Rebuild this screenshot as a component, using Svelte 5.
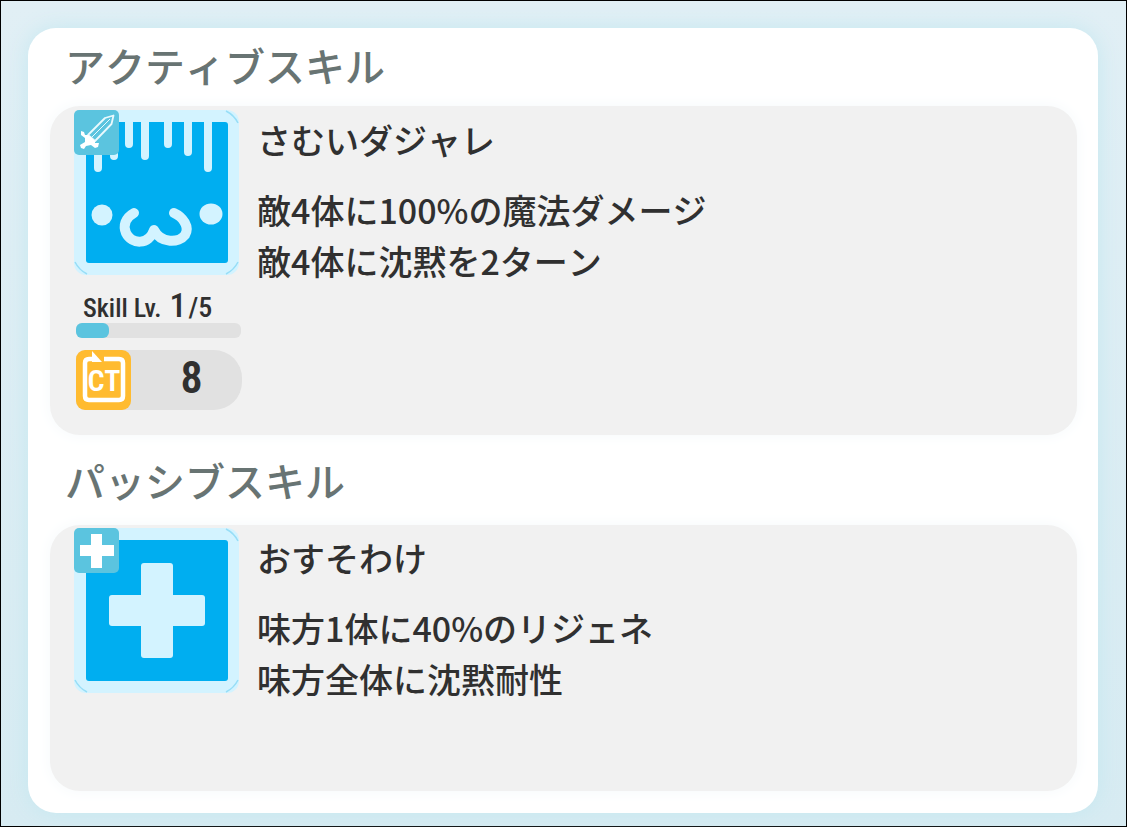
<script>
  const level = 1;
  const maxLevel = 5;
</script>

<main>
  <div class="panel">
    <section>
      <h2>アクティブスキル</h2>
      <article class="card active">
        <div class="side">
          <div class="icon">
            <svg viewBox="0 0 165 165" aria-hidden="true">
              <rect width="165" height="165" rx="12" fill="#d3f3ff" />
              <path d="M152 1Q160 5 164 13M1 152Q5 160 13 164M152 164Q160 160 164 152" fill="none" stroke="#97def7" stroke-width="1.5" />
              <rect x="12" y="12" width="142" height="141" rx="3" fill="#00aef0" />
              <path d="M24 12V58M40 12V46M55 12V34M71 12V46M94 12V34M114 12V42M134 12V58" stroke="#d3f3ff" stroke-width="8" stroke-linecap="round" />
              <circle cx="28" cy="105" r="10.5" fill="#d3f3ff" />
              <ellipse cx="137" cy="104" rx="11.5" ry="10.5" fill="#d3f3ff" />
              <path d="M60 103C51 108 49 116 52 123C58 135 75 135 80 120C87 134 105 133 111 125C116 117 109 107 100 103" fill="none" stroke="#d3f3ff" stroke-width="10" stroke-linecap="round" stroke-linejoin="round" />
            </svg>
            <svg class="badge" viewBox="0 0 45 45" aria-hidden="true">
              <rect width="45" height="45" rx="5" fill="#5bc4df" />
              <path d="M14 25L31 8L39.500 5.500L37.500 14L21 31Z" fill="none" stroke="#eaf9fd" stroke-width="1.8" stroke-linejoin="round" />
              <path d="M17 28L36 9" fill="none" stroke="#eaf9fd" stroke-width="1" />
              <path d="M7 21L10 22L11 25L14 25L21 31L21 33L25 33L24 37L21 38L17 35L12 36L10 39L7 38L6 35L11 32L11 28L7 25Z" fill="#fff" />
            </svg>
          </div>
          <div class="level">
            <span>Skill Lv.</span><b>{level}</b><span class="max">/{maxLevel}</span>
          </div>
          <div class="bar"><div class="fill" style="width: {(level / maxLevel) * 100}%"></div></div>
          <div class="cooldown">
            <svg class="ct" viewBox="0 0 55 60" role="img" aria-label="CT">
              <rect width="55" height="60" rx="9" fill="#ffbb30" />
              <path d="M28 9H43Q47 9 47 13V46Q47 50 43 50H13Q9 50 9 46V13Q9 9 13 9H17" fill="none" stroke="#fff" stroke-width="4.5" />
              <path d="M16 1L26 12H16Z" fill="#fff" />
              <text x="28" y="41" text-anchor="middle">CT</text>
            </svg>
            <strong>8</strong>
          </div>
        </div>
        <div class="info">
          <h3>さむいダジャレ</h3>
          <p>敵4体に100%の魔法ダメージ<br />敵4体に沈黙を2ターン</p>
        </div>
      </article>
    </section>
    <section>
      <h2>パッシブスキル</h2>
      <article class="card passive">
        <div class="side">
          <div class="icon">
            <svg viewBox="0 0 165 165" aria-hidden="true">
              <rect width="165" height="165" rx="12" fill="#d3f3ff" />
              <path d="M152 1Q160 5 164 13M1 152Q5 160 13 164M152 164Q160 160 164 152" fill="none" stroke="#97def7" stroke-width="1.5" />
              <rect x="12" y="12" width="142" height="141" rx="3" fill="#00aef0" />
              <rect x="67" y="35" width="32" height="95" rx="3" fill="#d3f3ff" />
              <rect x="35" y="67" width="96" height="31" rx="3" fill="#d3f3ff" />
            </svg>
            <svg class="badge" viewBox="0 0 45 45" aria-hidden="true">
              <rect width="45" height="45" rx="5" fill="#5bc4df" />
              <path d="M17 6H28V17H40V28H28V40H17V28H6V17H17Z" fill="#fff" />
            </svg>
          </div>
        </div>
        <div class="info">
          <h3>おすそわけ</h3>
          <p>味方1体に40%のリジェネ<br />味方全体に沈黙耐性</p>
        </div>
      </article>
    </section>
  </div>
</main>

<style>
  :global(body) {
    margin: 0;
  }
  main {
    box-sizing: border-box;
    min-height: 100vh;
    padding: 27px 28px 13px 27px;
    border: 1px solid #000;
    background: linear-gradient(#e1eff5, #d7ebf2);
    font-family: "Noto Sans CJK JP", sans-serif;
    font-weight: 500;
    font-kerning: none;
    color: #303030;
  }
  .panel {
    padding: 0 21px 22px 22px;
    border-radius: 28px;
    background: #fff;
    box-shadow: 0 0 22px #c5e8f0;
  }
  h2 {
    margin: 0;
    padding: 0 15px 4px;
    font-size: 40px;
    line-height: 74px;
    font-weight: 500;
    color: #687473;
  }
  section + section h2 {
    padding-top: 8px;
    padding-bottom: 8px;
  }
  .card {
    box-sizing: border-box;
    display: flex;
    gap: 17px;
    padding: 4px 24px 24px;
    border-radius: 30px;
    background: #f1f1f1;
    box-shadow: 0 0 16px #f5f9fb;
  }
  .active {
    min-height: 329px;
  }
  .passive {
    min-height: 266px;
    padding-top: 3px;
  }
  .side {
    flex: none;
    width: 166px;
  }
  .icon {
    position: relative;
    width: 165px;
    height: 165px;
  }
  svg {
    display: block;
    width: 100%;
  }
  .icon .badge {
    position: absolute;
    top: 0;
    left: 0;
    width: 45px;
    height: 45px;
  }
  .level,
  .cooldown {
    font-family: "Roboto Condensed", "Liberation Sans Narrow", "Liberation Sans", sans-serif;
    font-kerning: normal;
  }
  .level {
    display: flex;
    align-items: baseline;
    height: 48px;
    padding-left: 9px;
    font-size: 26px;
    line-height: 60px;
    font-weight: 500;
    white-space: nowrap;
  }
  .level b {
    margin: 0 2px 0 8px;
    font-size: 34px;
    font-weight: 500;
  }
  .level .max {
    font-size: 28px;
  }
  .bar {
    margin-left: 2px;
    width: 165px;
    height: 15px;
    border-radius: 6px;
    background: #e1e1e1;
  }
  .fill {
    height: 100%;
    border-radius: 6px;
    background: #5bc4df;
  }
  .cooldown {
    display: flex;
    align-items: center;
    width: 166px;
    height: 60px;
    margin: 12px 0 0 2px;
    border-radius: 9px 28px 28px 9px;
    background: #e1e1e1;
  }
  .ct {
    flex: none;
    width: 55px;
    height: 60px;
  }
  .ct text {
    fill: #fff;
    font-size: 30px;
    font-weight: 600;
  }
  strong {
    flex: 1;
    padding: 0 12px 4px 22px;
    font-size: 44px;
    line-height: 56px;
    font-weight: 600;
    text-align: center;
  }
  .info {
    min-width: 0;
    flex: 1;
  }
  h3 {
    margin: 0;
    padding-top: 4px;
    font-size: 34px;
    line-height: 52px;
    font-weight: 500;
  }
  p {
    margin: 18px 0 0;
    font-size: 34px;
    line-height: 51px;
  }
</style>
